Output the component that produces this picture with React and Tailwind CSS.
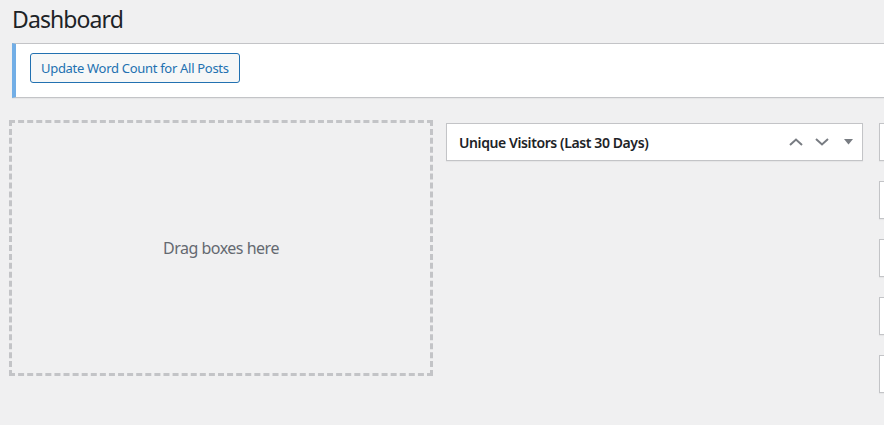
import React from "react";

function Chevron({ up }) {
  return (
    <svg width="14" height="8" viewBox="0 0 14 8" className="text-[#787c82]">
      <path
        d={up ? "M1 7 L7 1.5 L13 7" : "M1 1 L7 6.5 L13 1"}
        fill="none"
        stroke="currentColor"
        strokeWidth="2"
      />
    </svg>
  );
}

function Caret() {
  return (
    <svg width="9" height="6" viewBox="0 0 9 6" className="text-[#787c82]">
      <path d="M0 0 H9 L4.5 5.5 Z" fill="currentColor" />
    </svg>
  );
}

function Postbox({ title }) {
  return (
    <div className="h-[38px] border border-[#c3c4c7] bg-white shadow-[0_1px_1px_rgba(0,0,0,0.04)] flex items-center">
      <h2 className="flex-1 pl-3 text-[14px] font-semibold tracking-[-0.4px] text-[#1d2327] truncate">
        {title}
      </h2>
      {title && (
        <div className="flex items-center pr-[1px]">
          <button className="w-[26px] h-[36px] flex items-center justify-center">
            <Chevron up />
          </button>
          <button className="w-[26px] h-[36px] flex items-center justify-center">
            <Chevron />
          </button>
          <button className="w-[26px] h-[36px] flex items-center justify-center">
            <Caret />
          </button>
        </div>
      )}
    </div>
  );
}

export default function App() {
  return (
    <div
      className="w-[884px] min-h-screen overflow-hidden bg-[#f0f0f1] text-[#3c434a]"
      style={{ fontFamily: '"Noto Sans", "Open Sans", sans-serif' }}
    >
      <div className="w-[1320px]">
        {/* Title */}
        <h1 className="pl-[12px] pt-[4px] text-[23px] leading-[30px] font-normal tracking-[-0.9px] text-[#1d2327]">
          Dashboard
        </h1>

        {/* Notice */}
        <div className="ml-[12px] mt-[9px] h-[55px] bg-white border border-[#c3c4c7] border-l-4 border-l-[#72aee6] shadow-[0_1px_1px_rgba(0,0,0,0.04)] pl-[14px] pt-[9px]">
          <button className="h-[30px] px-[10px] rounded-[3px] border border-[#2271b1] bg-[#f6f7f7] text-[#2271b1] text-[13px] leading-[28px] tracking-[-0.3px]">
            Update Word Count for All Posts
          </button>
        </div>

        {/* Widgets */}
        <div className="mt-[25px] pl-[12px] flex items-start gap-[16px]">
          <div className="w-[418px] h-[250px] outline-3 outline-dashed outline-[#c3c4c7] flex items-center justify-center">
            <span className="text-[16px] tracking-[-0.5px] text-[#646970]">Drag boxes here</span>
          </div>
          <div className="w-[417px]">
            <Postbox title="Unique Visitors (Last 30 Days)" />
          </div>
          <div className="w-[417px] flex flex-col gap-[20px]">
            <Postbox title="" />
            <Postbox title="" />
            <Postbox title="" />
            <Postbox title="" />
            <Postbox title="" />
          </div>
        </div>
      </div>
    </div>
  );
}
